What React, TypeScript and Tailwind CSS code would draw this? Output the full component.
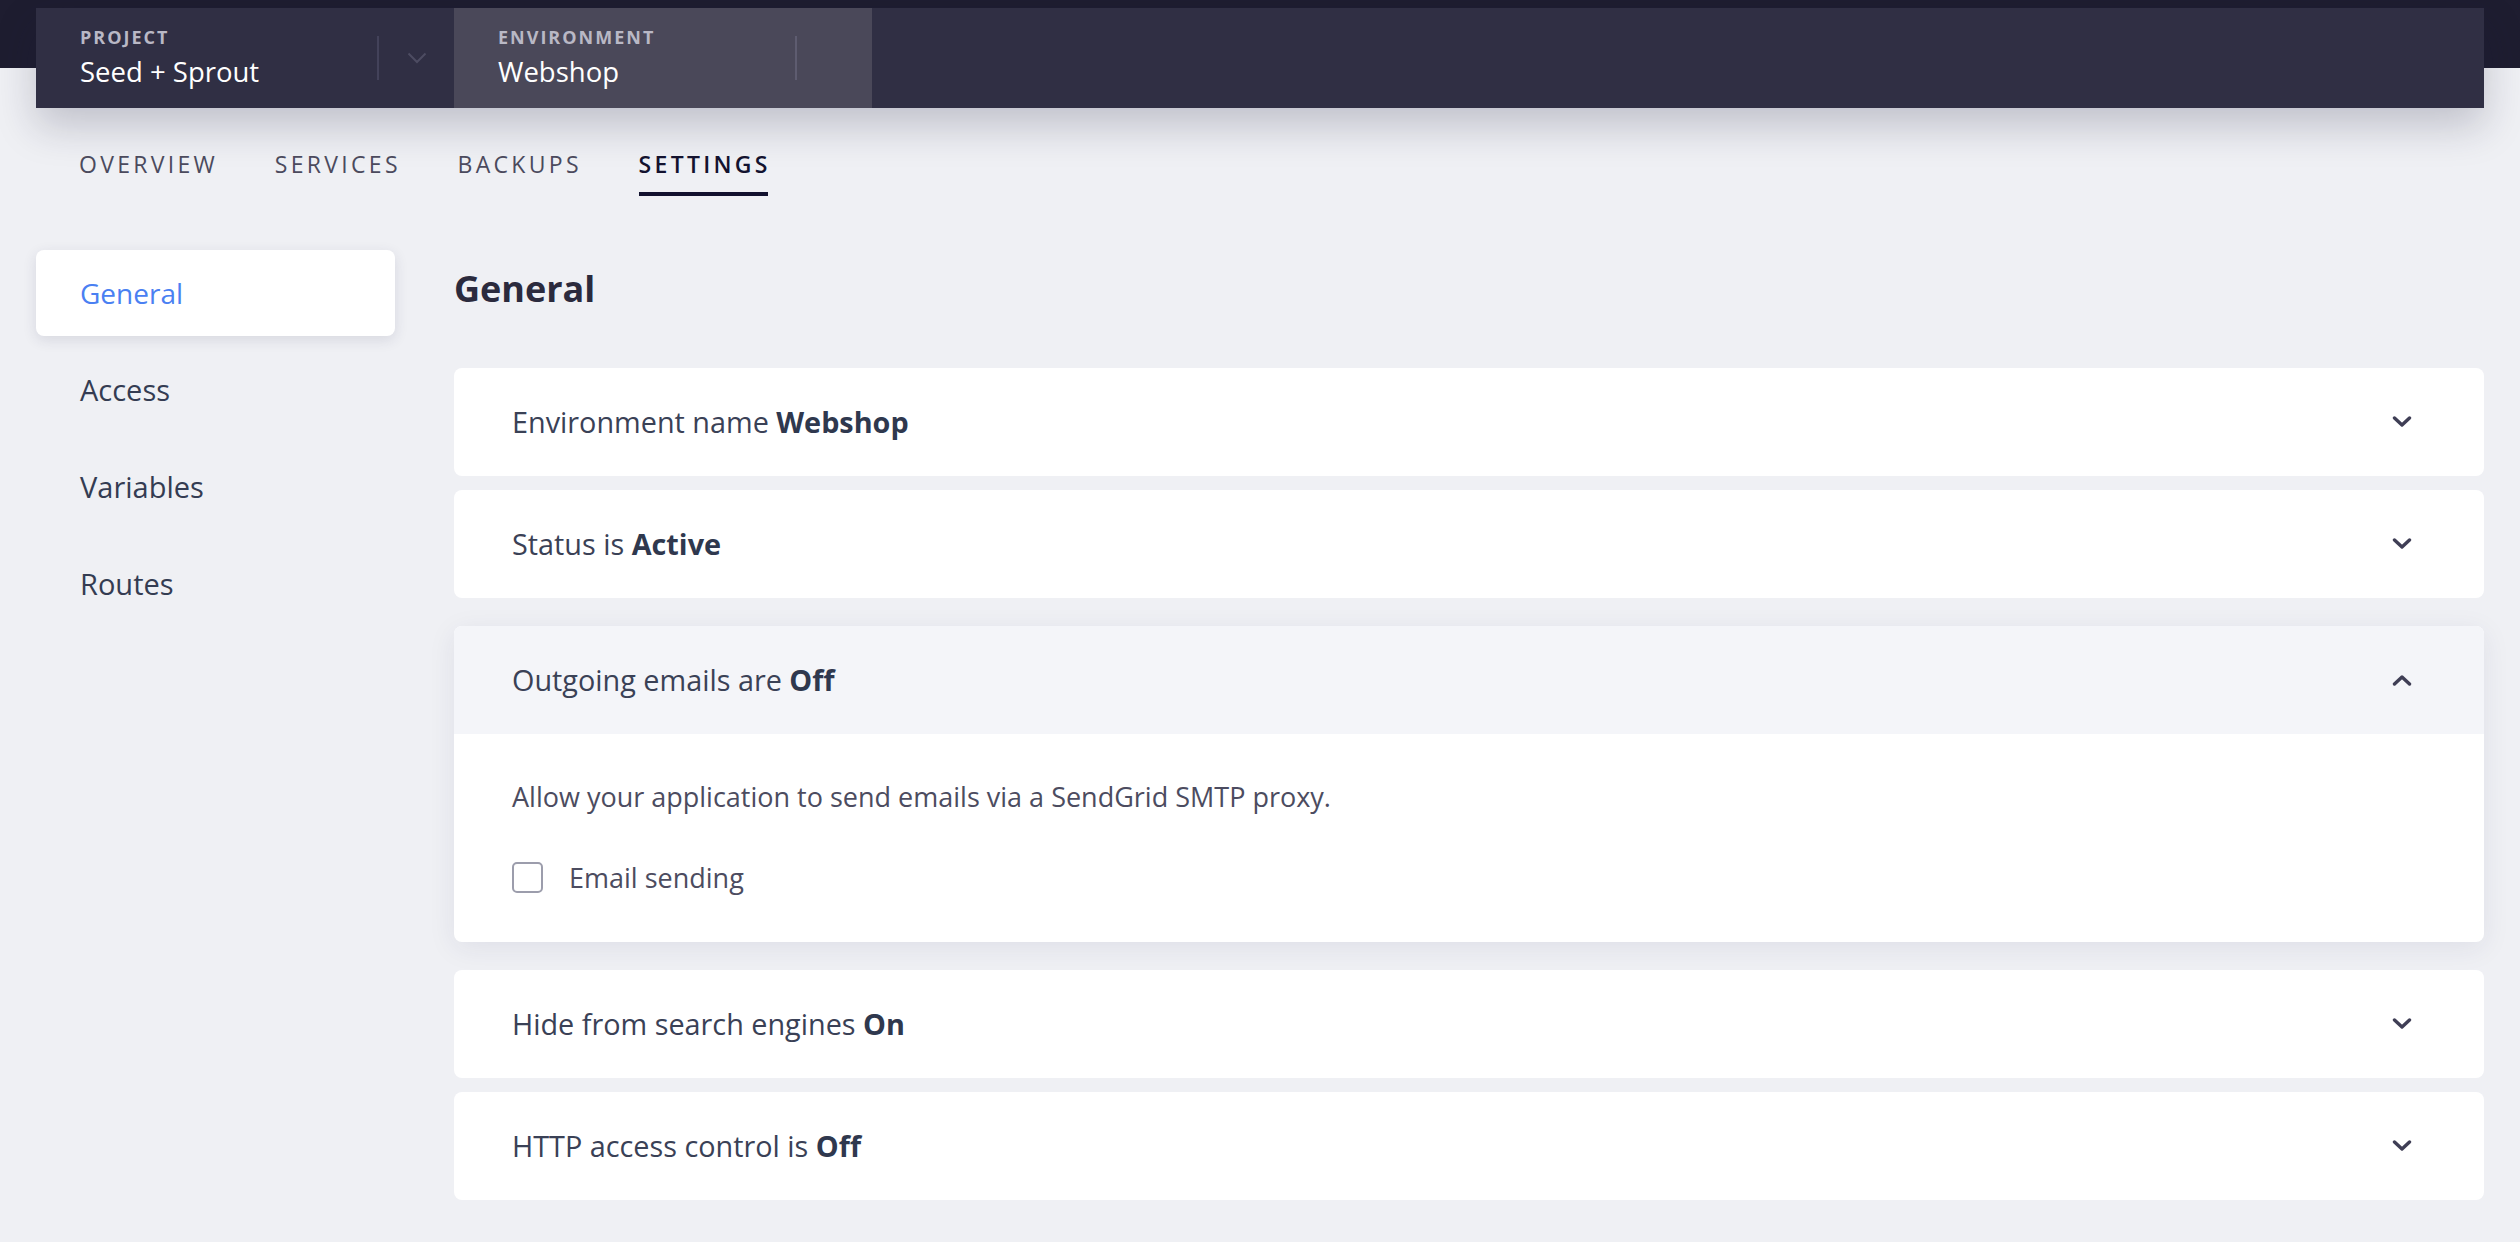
import { useState } from "react";

const font = { fontFamily: '"Open Sans", "Noto Sans", sans-serif' };

function ChevronIcon({ up = false }: { up?: boolean }) {
    return (
        <svg width="20" height="12" viewBox="0 0 20 12" fill="none">
            <path
                d={up ? "M2.5 10 L10 3 L17.5 10" : "M2.5 2 L10 9 L17.5 2"}
                stroke="#3f3e55"
                strokeWidth="3.4"
                strokeLinecap="round"
                strokeLinejoin="round"
            />
        </svg>
    );
}

function HeaderSection({ label, value, active, showChevron }: { label: string; value: string; active?: boolean; showChevron?: boolean }) {
    return (
        <div className={`flex w-[418px] h-full ${active ? "bg-[#4a4859]" : "bg-[#302f44]"}`}>
            <div className="flex-1 pl-[44px] pt-[20px]">
                <div className="text-[18px] leading-none font-bold tracking-[2px] text-[#b9b8c5]">{label}</div>
                <div className="mt-[12px] text-[27.5px] leading-none text-white">{value}</div>
            </div>
            <div className={`self-center h-[44px] w-[2px] ${active ? "bg-[#5e5c70]" : "bg-[#43425a]"}`} />
            <div className="w-[75px] flex justify-center pt-[44px]">
                {showChevron && (
                    <svg width="20" height="12" viewBox="0 0 20 12" fill="none">
                        <path d="M1.5 1.5 L10 10 L18.5 1.5" stroke="#4d4c62" strokeWidth="2" />
                    </svg>
                )}
            </div>
        </div>
    );
}

const tabs = ["OVERVIEW", "SERVICES", "BACKUPS", "SETTINGS"];
const navItems = ["General", "Access", "Variables", "Routes"];

function SettingRow({ label, value }: { label: string; value: string }) {
    return (
        <div className="h-[108px] bg-white rounded-[8px] flex items-center justify-between pl-[58px] pr-[72px]">
            <div className="text-[28.8px] text-[#3a4156]">
                {label} <span className="font-bold text-[#2f384e]">{value}</span>
            </div>
            <ChevronIcon />
        </div>
    );
}

export default function App() {
    const [emailSending, setEmailSending] = useState(false);

    return (
        <div className="min-h-screen bg-[#eff0f4] pb-[40px]" style={font}>
            {/* Top bar with project / environment switcher */}
            <div className="bg-[linear-gradient(#1e1d30_0,#1e1d30_68px,#eff0f4_68px)] pt-[8px] px-[36px]">
                <div className="h-[100px] flex bg-[#302f44] shadow-[0_18px_40px_rgba(28,28,58,0.22)]">
                    <HeaderSection label="PROJECT" value="Seed + Sprout" showChevron />
                    <HeaderSection label="ENVIRONMENT" value="Webshop" active />
                </div>
            </div>

            {/* Tabs */}
            <div className="flex gap-[60px] pl-[79px] mt-[45px]">
                {tabs.map((tab) => {
                    const active = tab === "SETTINGS";
                    return (
                        <div key={tab} className="flex flex-col">
                            <div
                                className={`text-[23px] leading-none tracking-[3.3px] mr-[-3.3px] ${
                                    active ? "font-semibold text-[#13122f]" : "text-[#4b4a5d]"
                                }`}
                            >
                                {tab}
                            </div>
                            <div className={`mt-[16px] h-[4px] ${active ? "bg-[#12112e]" : "bg-transparent"}`} />
                        </div>
                    );
                })}
            </div>

            {/* Body */}
            <div className="flex gap-[59px] px-[36px] mt-[54px]">
                <div className="w-[359px] flex flex-col gap-[11px]">
                    {navItems.map((item) => {
                        const active = item === "General";
                        return (
                            <div
                                key={item}
                                className={`h-[86px] flex items-center pl-[44px] rounded-[8px] ${
                                    active
                                        ? "text-[28px] bg-white text-[#4a80f2] shadow-[0_4px_14px_rgba(40,40,80,0.12)]"
                                        : "text-[29px] text-[#343c52]"
                                }`}
                            >
                                {item}
                            </div>
                        );
                    })}
                </div>

                <div className="flex-1">
                    <h1 className="mt-[21px] text-[36px] leading-none font-bold text-[#2b2a3d]">General</h1>

                    <div className="mt-[61px] flex flex-col gap-[14px]">
                        <SettingRow label="Environment name" value="Webshop" />
                        <SettingRow label="Status is" value="Active" />

                        {/* Expanded section */}
                        <div className="my-[14px] rounded-[8px] overflow-hidden bg-white shadow-[0_6px_28px_rgba(40,40,90,0.08)]">
                            <div className="h-[108px] bg-[#f4f5f9] flex items-center justify-between pl-[58px] pr-[72px]">
                                <div className="text-[28.8px] text-[#3a4156]">
                                    Outgoing emails are <span className="font-bold text-[#2f384e]">Off</span>
                                </div>
                                <ChevronIcon up />
                            </div>
                            <div className="pl-[58px] pt-[49px] pb-[49px]">
                                <div className="text-[27px] leading-none text-[#4c4c60]">
                                    Allow your application to send emails via a SendGrid SMTP proxy.
                                </div>
                                <label className="mt-[52px] flex items-center gap-[26px] cursor-pointer">
                                    <input
                                        type="checkbox"
                                        checked={emailSending}
                                        onChange={(e) => setEmailSending(e.target.checked)}
                                        className="appearance-none w-[31px] h-[31px] border-2 border-[#9c9dac] rounded-[5px] bg-white checked:bg-[#4a80f2] checked:border-[#4a80f2]"
                                    />
                                    <span className="text-[27px] leading-none text-[#4c4c60]">Email sending</span>
                                </label>
                            </div>
                        </div>

                        <SettingRow label="Hide from search engines" value="On" />
                        <SettingRow label="HTTP access control is" value="Off" />
                    </div>
                </div>
            </div>
        </div>
    );
}
